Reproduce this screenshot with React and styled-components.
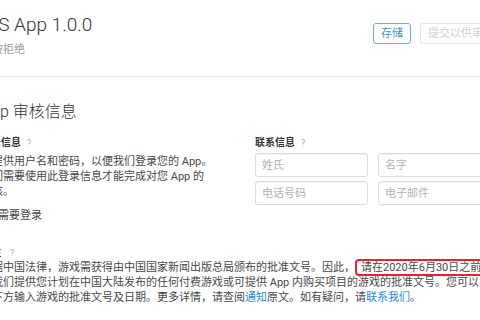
import React from "react";
import styled, { createGlobalStyle } from "styled-components";

const GlobalStyle = createGlobalStyle`
  html, body {
    margin: 0;
    padding: 0;
    background: #fff;
    overflow: hidden;
  }
  body {
    font-family: Roboto, "Noto Sans CJK SC", sans-serif;
    color: #333;
  }
`;

const Page = styled.div`
  width: 521px;
  margin-left: -19px;
`;

const Header = styled.header`
  display: flex;
  justify-content: space-between;
  align-items: flex-start;
  padding: 13px 0 18px;
  border-bottom: 1px solid #e8e8e8;
`;

const Title = styled.h1`
  margin: 0;
  font-size: 19px;
  line-height: 24px;
  font-weight: 300;
  color: #333;
`;

const Status = styled.div`
  display: flex;
  align-items: center;
  gap: 3px;
  margin-top: 5px;
  font-size: 11px;
  line-height: 16px;
  color: #9a9a9a;
`;

const StatusDot = styled.span`
  width: 8px;
  height: 8px;
  border-radius: 50%;
  background: #e0453a;
`;

const Actions = styled.div`
  display: flex;
  gap: 9px;
  padding-top: 10px;
`;

const Button = styled.button`
  height: 21px;
  padding: 0 7px;
  font-family: inherit;
  font-size: 11px;
  line-height: 19px;
  background: #fff;
  border-radius: 3px;
  border: 1px solid ${({ disabled }) => (disabled ? "#e6e6e6" : "#62b2d6")};
  color: ${({ disabled }) => (disabled ? "#d0d0d0" : "#3a98c6")};
`;

const Section = styled.section`
  padding-top: 24px;
`;

const SectionTitle = styled.h2`
  margin: 0;
  font-size: 16px;
  line-height: 22px;
  font-weight: 300;
  color: #333;
`;

const Columns = styled.div`
  display: grid;
  grid-template-columns: 233px 236px;
  column-gap: 41px;
  margin-top: 13px;
`;

const FieldLabel = styled.div`
  display: flex;
  align-items: center;
  gap: ${({ $gap }) => $gap || 6}px;
  font-size: 10px;
  line-height: 14px;
  font-weight: 700;
  color: #333;
`;

const Help = styled.span`
  font-size: 9px;
  font-weight: 400;
  color: #b0b0b0;
`;

const Text = styled.p`
  margin: 4px 0 0;
  font-size: 11px;
  line-height: 15px;
  color: #484848;
`;

const CheckRow = styled.label`
  display: flex;
  align-items: center;
  gap: 5px;
  margin-top: 10px;
  font-size: 11px;
  line-height: 14px;
  color: #484848;
`;

const CheckBox = styled.span`
  width: 12px;
  height: 12px;
  box-sizing: border-box;
  border: 1px solid #bdbdbd;
  border-radius: 2px;
  background: #fff;
`;

const InputGrid = styled.div`
  display: grid;
  grid-template-columns: 1fr 1fr;
  gap: 4px 10px;
  margin-top: 3px;
`;

const Input = styled.input`
  height: 24px;
  width: 100%;
  box-sizing: border-box;
  padding: 0 6px;
  border: 1px solid #dcdcdc;
  border-radius: 3px;
  box-shadow: inset 0 1px 1px rgba(0, 0, 0, 0.05);
  font-family: inherit;
  font-size: 11px;
  color: #333;
  outline: none;
  &::placeholder {
    color: #b3b3b3;
  }
`;

const Notes = styled.div`
  margin-top: 23px;
`;

const Paragraph = styled.p`
  width: 506px;
  margin: 0;
  font-size: 11px;
  line-height: 15px;
  color: #484848;
`;

const Highlight = styled.span`
  padding: 0 2px 0 4px;
  border: 2px solid #e3262b;
  border-radius: 4px;
`;

const Link = styled.a`
  color: #2e8ad8;
  text-decoration: none;
`;

export default function App() {
  return (
    <>
      <GlobalStyle />
      <Page>
        <Header>
          <div>
            <Title>iOS App 1.0.0</Title>
            <Status>
              <StatusDot />
              被拒绝
            </Status>
          </div>
          <Actions>
            <Button>存储</Button>
            <Button disabled>提交以供审核</Button>
          </Actions>
        </Header>

        <Section>
          <SectionTitle>App 审核信息</SectionTitle>
          <Columns>
            <div>
              <FieldLabel>
                登录信息 <Help>?</Help>
              </FieldLabel>
              <Text>
                请提供用户名和密码，以便我们登录您的 App。我们需要使用此登录信息才能完成对您 App 的审核。
              </Text>
              <CheckRow>
                <CheckBox />
                需要登录
              </CheckRow>
            </div>
            <div>
              <FieldLabel>
                联系信息 <Help>?</Help>
              </FieldLabel>
              <InputGrid>
                <Input placeholder="姓氏" />
                <Input placeholder="名字" />
                <Input placeholder="电话号码" />
                <Input placeholder="电子邮件" />
              </InputGrid>
            </div>
          </Columns>

          <Notes>
            <FieldLabel $gap={9}>
              备注 <Help>?</Help>
            </FieldLabel>
            <Paragraph>
              根据中国法律，游戏需获得由中国国家新闻出版总局颁布的批准文号。因此，
              <Highlight>请在2020年6月30日之前</Highlight>
              <br />
              为我们提供您计划在中国大陆发布的任何付费游戏或可提供 App 内购买项目的游戏的批准文号。您可以在下方输入游戏的批准文号及日期。更多详情，请查阅
              <Link href="#">通知</Link>原文。如有疑问，请<Link href="#">联系我们</Link>。
            </Paragraph>
          </Notes>
        </Section>
      </Page>
    </>
  );
}
